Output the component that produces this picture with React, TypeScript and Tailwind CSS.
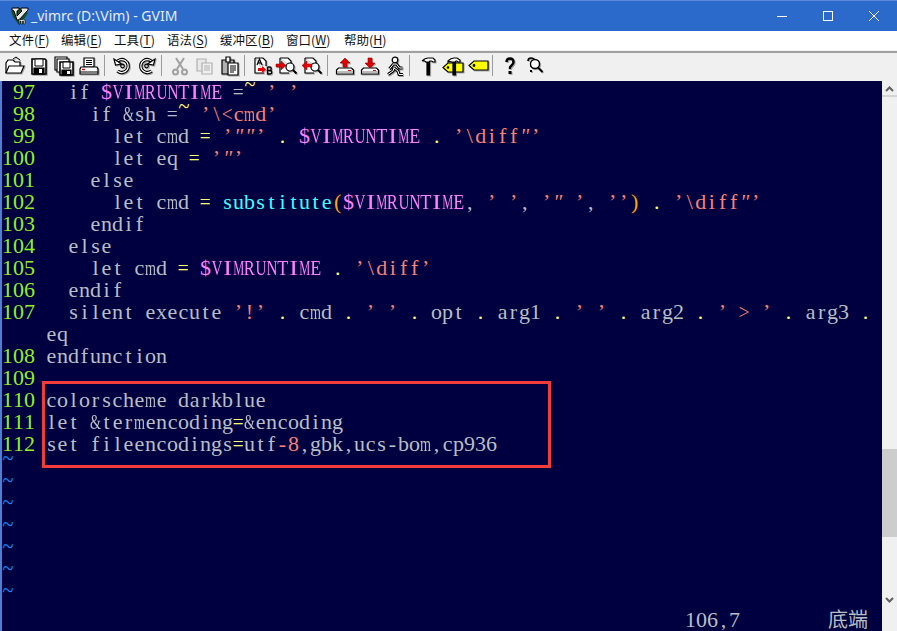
import type { ReactNode } from "react";

// cell grid: every screen column is 11px wide, every row 22px tall
const CELL = 11;
const FONT_PX = 22;

// glyphs whose natural width (in em) doesn't fit a cell get squeezed / stretched onto it
const FIT: Record<string, number> = {
  m: 0.778, w: 0.722, V: 0.722, I: 0.333, M: 0.889, R: 0.667, U: 0.722, N: 0.722, T: 0.611, E: 0.611,
  "&": 0.778, "=": 0.564, "<": 0.564, ">": 0.564, "~": 0.541,
};

const NORMAL = "text-[#b8bec4]";
const OP = "text-[#ffff70]";
const STR = "text-[#f88078]";
const VAR = "text-[#ff80ff]";
const FN = "text-[#40ffff]";
const PAREN = "text-[#ffa500]";

type Seg = [string, string];

function Cell({ ch, color }: { ch: string; color: string }) {
  const em = FIT[ch];
  const natural = em ? em * FONT_PX : 0;
  const lift = ch === "~" ? -8 : 0;
  // a full stretch makes the I stem look bold, so it only goes part of the way
  const scale = ch === "I" ? 1.2 : CELL / natural;
  const style = em
    ? {
        marginLeft: (CELL - natural) / 2,
        marginRight: (CELL - natural) / 2,
        transform: `translateY(${lift}px) scaleX(${scale})`,
      }
    : undefined;
  return (
    <span
      className={`flex-none ${em ? "" : "w-[11px] text-center"} ${color} ${ch === '"' ? "italic" : ""}`}
      style={style}
    >
      {ch}
    </span>
  );
}

function Row({ num, segs }: { num: string; segs: Seg[] }) {
  const gutter = num.padStart(3, " ") + " ";
  return (
    <div className="flex h-[22px] leading-[22px] whitespace-pre">
      {gutter.split("").map((c, i) => (
        <Cell key={"g" + i} ch={c} color="text-[#90f020]" />
      ))}
      {segs.map((s, i) =>
        s[0].split("").map((c, j) => <Cell key={i + "-" + j} ch={c} color={s[1]} />)
      )}
    </div>
  );
}

const rows: { num: string; segs: Seg[] }[] = [
  { num: "97", segs: [["  if ", NORMAL], ["$VIMRUNTIME", VAR], [" =", NORMAL], ["~", OP], [" ", NORMAL], ["’ ’", STR]] },
  { num: "98", segs: [["    if &sh ", NORMAL], ["=", NORMAL], ["~", OP], [" ", NORMAL], ["’\\<cmd’", STR]] },
  { num: "99", segs: [["      let cmd ", NORMAL], ["= ", OP], ['’""’', STR], [" . ", OP], ["$VIMRUNTIME", VAR], [" . ", OP], ['’\\diff"’', STR]] },
  { num: "100", segs: [["      let eq ", NORMAL], ["= ", OP], ['’"’', STR]] },
  { num: "101", segs: [["    else", NORMAL]] },
  { num: "102", segs: [["      let cmd ", NORMAL], ["= ", OP], ["substitute", FN], ["(", PAREN], ["$VIMRUNTIME", VAR], [", ", NORMAL], ["’ ’", STR], [", ", NORMAL], ['’" ’', STR], [", ", NORMAL], ["’’", STR], [")", PAREN], [" . ", OP], ['’\\diff"’', STR]] },
  { num: "103", segs: [["    endif", NORMAL]] },
  { num: "104", segs: [["  else", NORMAL]] },
  { num: "105", segs: [["    let cmd ", NORMAL], ["= ", OP], ["$VIMRUNTIME", VAR], [" . ", OP], ["’\\diff’", STR]] },
  { num: "106", segs: [["  endif", NORMAL]] },
  { num: "107", segs: [["  silent execute ", NORMAL], ["’!’", STR], [" . ", OP], ["cmd", NORMAL], [" . ", OP], ["’ ’", STR], [" . ", OP], ["opt", NORMAL], [" . ", OP], ["arg1", NORMAL], [" . ", OP], ["’ ’", STR], [" . ", OP], ["arg2", NORMAL], [" . ", OP], ["’ > ’", STR], [" . ", OP], ["arg3", NORMAL], [" .", OP]] },
  { num: "", segs: [["eq", NORMAL]] },
  { num: "108", segs: [["endfunction", NORMAL]] },
  { num: "109", segs: [] },
  { num: "110", segs: [["colorscheme darkblue", NORMAL]] },
  { num: "111", segs: [["let &termencoding", NORMAL], ["=", OP], ["&encoding", NORMAL]] },
  { num: "112", segs: [["set fileencodings", NORMAL], ["=", OP], ["utf", NORMAL], ["-8", STR], [",gbk,ucs-bom,cp936", NORMAL]] },
];

function Icon({ children, shadow = true }: { children: ReactNode; shadow?: boolean }) {
  return (
    <svg
      width="24"
      height="22"
      viewBox="0 0 24 22"
      className={shadow ? "drop-shadow-[1px_1px_0_#a8a8a8]" : ""}
      fill="none"
      stroke="#000"
      strokeWidth="1.2"
    >
      {children}
    </svg>
  );
}

const Sep = () => (
  <div className="flex-none w-[8px] h-[21px] flex">
    <div className="w-[1px] h-full ml-[2px] bg-[#9a9a9a]" />
  </div>
);

const Disk = ({ arrow }: { arrow: "up" | "down" }) => (
  <Icon>
    <path d="M5.500 13h13l2 2v4h-17v-4z" fill="#fff" />
    <path d="M4 17h16" strokeWidth="1" stroke="#777" />
    <path d="M15 15.500h3" stroke="#e00000" strokeWidth="1" />
    {arrow === "up" ? (
      <path d="M12 3l5 5h-3v4h-4V8H7z" fill="#e00000" stroke="#900" strokeWidth="0.6" />
    ) : (
      <path d="M10 3h4v5h3l-5 5-5-5h3z" fill="#e00000" stroke="#900" strokeWidth="0.6" />
    )}
  </Icon>
);

const Magnifier = () => (
  <>
    <circle cx="15" cy="12" r="4" fill="#fff" />
    <path d="M18 15l3.500 3.500" strokeWidth="2" />
  </>
);

const Page = () => <path d="M5 3h8l3 3v5M5 3v15h9" fill="#fff" />;

// curved arrow ring, black outline around a white band
const Ring = ({ d }: { d: string }) => (
  <>
    <path d={d} strokeWidth="3.400" />
    <path d={d} strokeWidth="1.200" stroke="#fff" />
  </>
);

const tools: (ReactNode | null)[] = [
  // open
  <Icon key="open">
    <path d="M4 18V8l2-3h5l2 2h5v4" fill="#fff" />
    <path d="M4 18l3-7h15l-3 7z" fill="#fff" />
    <path d="M11 4l3-2 4 3" strokeWidth="1" />
  </Icon>,
  // save
  <Icon key="save">
    <path d="M5 4h13l1 1v14H5z" fill="#fff" strokeWidth="1.6" />
    <path d="M8 4h8v7H8z" fill="#fff" strokeWidth="1" />
    <path d="M7 13h10v6H7z" fill="#000" />
    <path d="M12 14h3v4h-3z" fill="#fff" stroke="none" />
  </Icon>,
  // save all
  <Icon key="saveall">
    <path d="M3 2h12v4H7v9H3z" fill="#fff" />
    <path d="M5 4h12v4H9v9H5z" fill="#fff" />
    <path d="M8 7h13v13H8z" fill="#fff" strokeWidth="1.6" />
    <path d="M11 7h7v6h-7z" fill="#fff" strokeWidth="1" />
    <path d="M10 15h9v5h-9z" fill="#000" />
    <path d="M15 16h3v3h-3z" fill="#fff" stroke="none" />
  </Icon>,
  // print
  <Icon key="print">
    <path d="M7 3h10v9H7z" fill="#fff" />
    <path d="M9 5.500h6M9 7.500h6M9 9.500h6" strokeWidth="1" />
    <path d="M4 12h16l1 2v5H3v-5z" fill="#fff" />
    <path d="M5 14.500h3" stroke="#e00000" strokeWidth="1.400" />
    <path d="M3 17h18" strokeWidth="1" />
  </Icon>,
  null,
  // undo
  <Icon key="undo">
    <Ring d="M6 8a6.500 6.500 0 1 1 1.500 8" />
    <path d="M4 4l1.500 6 6-1z" fill="#fff" />
    <circle cx="12.500" cy="11" r="1.800" strokeWidth="1.200" />
  </Icon>,
  // redo
  <Icon key="redo">
    <Ring d="M18 8a6.500 6.500 0 1 0-1.500 8" />
    <path d="M20 4l-1.500 6-6-1z" fill="#fff" />
    <circle cx="11.500" cy="11" r="1.800" strokeWidth="1.200" />
  </Icon>,
  null,
  // cut (disabled)
  <Icon key="cut" shadow={false}>
    <g stroke="#a0a0a0" strokeWidth="2">
      <path d="M8 3l7 11M16 3L9 14" />
      <circle cx="7.500" cy="17" r="2.500" />
      <circle cx="16.500" cy="17" r="2.500" />
    </g>
  </Icon>,
  // copy (disabled)
  <Icon key="copy" shadow={false}>
    <g stroke="#b0b0b0" strokeWidth="1.200">
      <path d="M4 4h9v12H4z" fill="#e8e8e8" />
      <path d="M9 8h10v11H9z" fill="#f0f0f0" />
      <path d="M11 11h6M11 13h6M11 15h6" />
    </g>
  </Icon>,
  // paste
  <Icon key="paste">
    <path d="M4 5h12v14H4z" fill="#b0b0b0" />
    <path d="M8 2h4v5H8z" fill="#fff" />
    <path d="M10 8h10v12H10z" fill="#fff" />
    <path d="M12 11h6M12 13h6M12 15h6M12 17h4" strokeWidth="1" />
  </Icon>,
  null,
  // replace A -> B
  <Icon key="replace">
    <Page />
    <path d="M7 10l2.500-6 2.500 6M8 8h3" />
    <path d="M8 13h4v-2l4 3.500-4 3.500v-2H8z" fill="#e00000" stroke="none" />
    <path d="M17.500 12v7h2.500a1.700 1.700 0 0 0 0-3.500h-2.500M17.500 15.500h2a1.700 1.700 0 0 0 0-3.500h-2" strokeWidth="1.400" />
  </Icon>,
  // find next
  <Icon key="next">
    <Page />
    <Magnifier />
    <path d="M1 9h5V6l5 4.500-5 4.500v-3H1z" fill="#e00000" stroke="#900" strokeWidth="0.500" />
  </Icon>,
  // find prev
  <Icon key="prev">
    <Page />
    <Magnifier />
    <path d="M12 9H7V6l-5 4.500L7 15v-3h5z" fill="#e00000" stroke="#900" strokeWidth="0.500" />
  </Icon>,
  null,
  <Disk key="load" arrow="up" />,
  <Disk key="savesess" arrow="down" />,
  // run script
  <Icon key="run">
    <circle cx="12" cy="5" r="2.800" fill="#fff" strokeWidth="1.200" />
    <path d="M10.500 9h3l3 4h3M10.500 9l-4 5M11 13l4 3 1 3.500h4M11 13l-1 3-5 3.500" strokeWidth="3" />
    <path d="M10.500 9h3l3 4h3M10.500 9l-4 5M11 13l4 3 1 3.500h4M11 13l-1 3-5 3.500" strokeWidth="1" stroke="#fff" />
  </Icon>,
  null,
  // make
  <Icon key="make">
    <path d="M6 6q3-3 6-3h5l2 2v2h-2q-1-1-2-1h-1l-1 1h-3Q8 5 6 6z" fill="#fff" />
    <path d="M11 7.500h2.500V20H11z" fill="#000" />
  </Icon>,
  // build tags
  <Icon key="tags">
    <path d="M7 8h15v9H7l-5-4.500z" fill="#ffff00" />
    <circle cx="7" cy="12.500" r="0.700" fill="#000" />
    <path d="M7 6q3-3 6-3h3l3 2v2h-2l-1-1h-1l-1 1h-3Q9 6 7 7z" fill="#fff" />
    <path d="M12 7.500h2.500V20H12z" fill="#000" />
  </Icon>,
  // tag jump
  <Icon key="jump">
    <path d="M8 6h14v9H8l-5-4.500z" fill="#ffff00" />
    <circle cx="8" cy="10.500" r="0.800" fill="#000" />
  </Icon>,
  null,
  // help
  <Icon key="help">
    <path d="M8.500 7q0-3.500 3.500-3.500T15.500 7q0 2-2 3.500T12 14" strokeWidth="2.400" />
    <path d="M10.500 16h3v3h-3z" fill="#000" stroke="none" />
  </Icon>,
  // find help
  <Icon key="findhelp">
    <path d="M5 6q0-3 3-3t3.500 2M8 9v3" strokeWidth="1.600" />
    <circle cx="12" cy="9" r="4.500" fill="#fff" strokeWidth="1.400" />
    <path d="M15 12.500l4.500 4.500" strokeWidth="2" />
    <path d="M7 15v2h2v-2z" fill="#000" stroke="none" />
  </Icon>,
];

const menus: [string, string, string][] = [
  ["文件", "F", "w-[52px]"],
  ["编辑", "E", "w-[53px]"],
  ["工具", "T", "w-[53px]"],
  ["语法", "S", "w-[53px]"],
  ["缓冲区", "B", "w-[66px]"],
  ["窗口", "W", "w-[58px]"],
  ["帮助", "H", "w-[50px]"],
];

export default function App() {
  return (
    <div className="w-[897px] h-[631px] overflow-hidden flex flex-col bg-[#f0f0f0]">
      {/* title bar */}
      <div className="flex-none h-[31px] flex items-center bg-[#2b69cb] border-t border-[#5a8ad8] text-[#e4ecf8]">
        <div className="ml-[10px] w-[20px] h-[20px]">
          <svg width="20" height="20" viewBox="0 0 20 20">
            <path d="M1 5l7-4 10 6-6 9-3 3-6-8z" fill="#14502c" />
            <path d="M2 2h7v2L7 5v5l5-5-1-1V2h7v2l-9 10H7L4 5 2 4z" fill="#e8e8e8" stroke="#000" strokeWidth="1" />
            <path d="M9 18v-5h1v1l1-1 1 1 1-1 2 1v4h-1.500v-3h-1v3H11v-3h-1v3z" fill="#e8e8e8" stroke="#000" strokeWidth="0.600" />
          </svg>
        </div>
        <div className="ml-[1px] font-['Noto_Sans',sans-serif] text-[14px] leading-none">_vimrc (D:\Vim) - GVIM</div>
        <div className="ml-auto flex items-center">
          <div className="w-[46px] flex justify-center">
            <div className="w-[10px] h-[1px] bg-white" />
          </div>
          <div className="w-[46px] flex justify-center">
            <div className="w-[10px] h-[10px] border border-white" />
          </div>
          <div className="w-[46px] flex justify-center">
            <svg width="10" height="10" viewBox="0 0 10 10" stroke="#fff" strokeWidth="1">
              <path d="M0 0l10 10M10 0L0 10" />
            </svg>
          </div>
        </div>
      </div>

      {/* menu */}
      <div className="flex-none h-[19px] pl-[9px] flex items-center bg-white text-[12.500px] font-['Noto_Sans_CJK_SC',sans-serif] text-[#111]">
        {menus.map(([label, key, w]) => (
          <div key={key} className={`${w} flex-none whitespace-nowrap`}>
            {label}(<span className="underline underline-offset-2">{key}</span>)
          </div>
        ))}
      </div>

      {/* toolbar */}
      <div className="flex-none h-[30px] mt-[1px] pl-[2px] pb-[3px] flex items-center border-t-2 border-[#a0a0a0] bg-[#f0f0f0]">
        {tools.map((t, i) =>
          t === null ? (
            <Sep key={i} />
          ) : (
            <div key={i} className="flex-none w-[24.900px] flex justify-center">
              {t}
            </div>
          )
        )}
      </div>

      {/* editor + scrollbar */}
      <div className="flex-1 min-h-0 flex pl-[2px] bg-[#4c7fcf]">
        <div className="w-[880px] h-full bg-[#000040] font-['Liberation_Serif','Noto_Sans_CJK_SC',serif] text-[22px] relative">
          {rows.map((r, i) => (
            <Row key={i} num={r.num} segs={r.segs} />
          ))}
          {Array.from({ length: 7 }).map((_, i) => (
            <div key={i} className="flex h-[22px] leading-[22px]">
              <Cell ch="~" color="text-[#0090ff]" />
            </div>
          ))}
          <div className="flex h-[22px] leading-[22px] whitespace-pre">
            <div className="ml-[683px] w-[143px] flex">
              {"106,7".split("").map((c, i) => (
                <Cell key={i} ch={c} color={NORMAL} />
              ))}
            </div>
            <div className={`text-[20px] ${NORMAL}`}>底端</div>
          </div>

          {/* red annotation */}
          <div className="absolute left-[40px] top-[300px] w-[509px] h-[87px] border-[3px] border-[#f23c3c]" />
        </div>

        <div className="w-[15px] h-full flex flex-col bg-[#f0f0f0]">
          <div className="h-[16px] pt-[2px] flex items-center justify-center border-b-2 border-[#d4d4d4]">
            <svg width="9" height="6" viewBox="0 0 9 6" fill="none" stroke="#606060" strokeWidth="2">
              <path d="M1 5l3.500-3.500L8 5" />
            </svg>
          </div>
          <div className="h-[352px]" />
          <div className="h-[88px] bg-[#cdcdcd]" />
          <div className="flex-1" />
          <div className="h-[36px] pt-[2px] flex justify-center">
            <svg width="9" height="6" viewBox="0 0 9 6" fill="none" stroke="#606060" strokeWidth="2">
              <path d="M1 1l3.500 3.500L8 1" />
            </svg>
          </div>
        </div>
      </div>
    </div>
  );
}
